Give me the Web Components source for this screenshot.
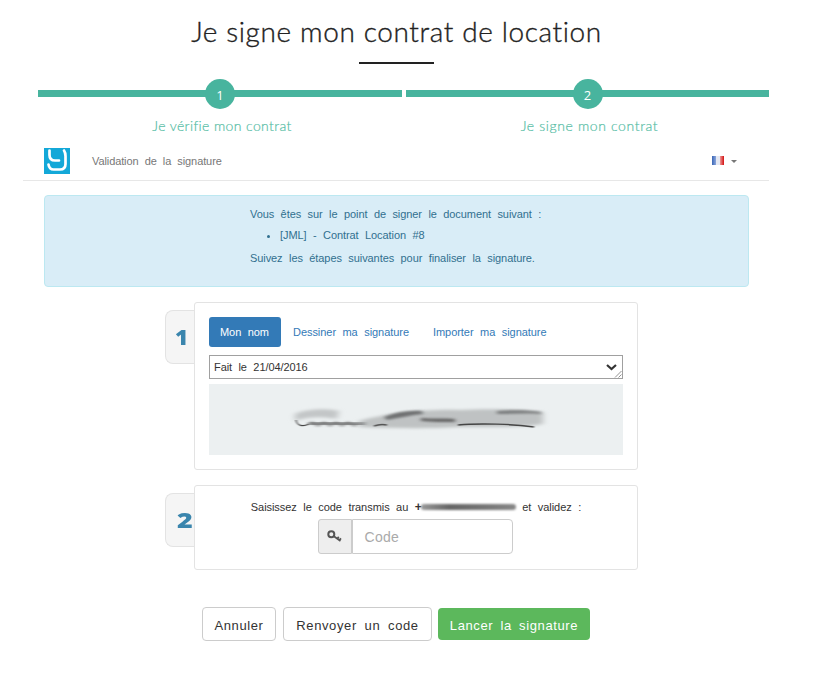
<!DOCTYPE html>
<html lang="fr">
<head>
<meta charset="utf-8">
<title>Je signe mon contrat de location</title>
<style>
  html, body { margin: 0; padding: 0; background: #fff; }
  body { font-family: "Liberation Sans", Arial, sans-serif; font-size: 11px; color: #333; }
</style>
</head>
<body>
<sign-page>
  <page-title text="Je signe mon contrat de location"></page-title>
  <step-bar>
    <step-item num="1" label="Je vérifie mon contrat" style="--label-shift: 4px"></step-item>
    <step-item num="2" label="Je signe mon contrat" style="--label-spacing: 0.62px; --label-shift: 4px"></step-item>
  </step-bar>
  <top-bar title-text="Validation de la signature"></top-bar>
  <info-alert></info-alert>
  <sign-block num="1" class="first">
    <sign-tabs></sign-tabs>
    <sign-preview></sign-preview>
  </sign-block>
  <sign-block num="2" class="second">
    <code-form></code-form>
  </sign-block>
  <action-bar></action-bar>
</sign-page>

<script>
class SignPage extends HTMLElement {
  constructor() {
    super();
    const shadow = this.attachShadow({ mode: 'open' });
    shadow.innerHTML = `
      <style>
        :host { display: block; width: 793px; height: 680px; }
      </style>
      <slot></slot>
    `;
  }
}

class PageTitle extends HTMLElement {
  constructor() {
    super();
    const shadow = this.attachShadow({ mode: 'open' });
    shadow.innerHTML = `
      <style>
        :host { display: block; padding-top: 13px; text-align: center; }
        h1 {
          margin: 0;
          font: 300 28px/36px Lato, sans-serif;
          letter-spacing: 0.62px;
          -webkit-text-stroke: 0.35px #222;
          color: #222;
        }
        .rule { width: 75px; height: 2px; margin: 13px auto 0; background: #222; }
      </style>
      <h1>${this.getAttribute('text')}</h1>
      <div class="rule"></div>
    `;
  }
}

class StepBar extends HTMLElement {
  constructor() {
    super();
    const shadow = this.attachShadow({ mode: 'open' });
    shadow.innerHTML = `
      <style>
        :host {
          display: grid;
          grid-template-columns: 364px 363px;
          column-gap: 4px;
          margin: 15px 0 0 38px;
          width: 731px;
        }
      </style>
      <slot></slot>
    `;
  }
}

class StepItem extends HTMLElement {
  constructor() {
    super();
    const shadow = this.attachShadow({ mode: 'open' });
    shadow.innerHTML = `
      <style>
        :host { display: block; text-align: center; }
        .track { display: flex; align-items: center; justify-content: center; height: 30px; position: relative; }
        .track::before {
          content: ""; position: absolute; left: 0; right: 0; top: 11px; height: 7px; background: #48b49e;
        }
        .dot {
          position: relative; width: 30px; height: 30px; border-radius: 50%;
          background: #48b49e; color: #fff;
          font: 13px/32px "Open Sans", sans-serif;
        }
        .label {
          margin-top: 7px;
          padding-left: var(--label-shift, 0);
          font: 300 14px/20px Lato, sans-serif;
          letter-spacing: var(--label-spacing, 0.38px);
          -webkit-text-stroke: 0.2px #55bda5;
          color: #55bda5;
        }
      </style>
      <div class="track"><div class="dot">${this.getAttribute('num')}</div></div>
      <div class="label">${this.getAttribute('label')}</div>
    `;
  }
}

class TopBar extends HTMLElement {
  constructor() {
    super();
    const shadow = this.attachShadow({ mode: 'open' });
    shadow.innerHTML = `
      <style>
        :host {
          display: flex; align-items: center;
          margin: 8px 0 0 23px; width: 746px; height: 37px;
          padding: 0 32px 0 21px; box-sizing: border-box;
          border-bottom: 1px solid #e7e7e7;
          color: #777; font-size: 11px;
          letter-spacing: -0.1px; word-spacing: 3.2px;
        }
        .logo { width: 26px; height: 26px; flex: none; margin-top: -3px; }
        .name { margin-left: 22px; flex: 1; margin-top: -3px; }
        .flag { width: 12px; height: 9px; display: flex; margin-top: -3px; box-sizing: border-box; }
        .flag i { flex: 1; }
        .flag i:nth-child(1) { background: linear-gradient(90deg, #3a66b5, #8ba6dc); }
        .flag i:nth-child(2) { background: #e4e8f2; }
        .flag i:nth-child(3) { background: linear-gradient(90deg, #eb9a9a, #d40f0f); }
        .caret {
          width: 0; height: 0; margin: -1px 0 0 7px;
          border-left: 3px solid transparent; border-right: 3px solid transparent; border-top: 3px solid #777;
        }
      </style>
      <svg class="logo" viewBox="0 0 26 26">
        <rect width="26" height="26" fill="#13a8d8"/>
        <path d="M5.500 2.500 V7 C5.500 11 7.500 12.500 11 12.500 H15 M20 2.500 C21 4 21.500 5 21.500 8 V16 C21.500 19.500 19.500 21.500 16 21.500 H9.500 C6.500 21.500 5 19.500 4.500 16.500" fill="none" stroke="#fff" stroke-width="2.700" stroke-linecap="round"/>
      </svg>
      <div class="name">${this.getAttribute('title-text')}</div>
      <div class="flag"><i></i><i></i><i></i></div>
      <div class="caret"></div>
    `;
  }
}

class InfoAlert extends HTMLElement {
  constructor() {
    super();
    const shadow = this.attachShadow({ mode: 'open' });
    shadow.innerHTML = `
      <style>
        :host {
          display: block; box-sizing: border-box;
          margin: 14px 0 0 44px; width: 705px; height: 92px; padding-top: 10px;
          background: #d9edf7; border: 1px solid #bce8f1; border-radius: 4px;
          color: #31708f; font-size: 11px; line-height: 16px;
          letter-spacing: -0.08px; word-spacing: 3.5px;
        }
        .inner { width: 292px; margin-left: 205px; }
        p { margin: 0; white-space: nowrap; }
        ul { margin: 5px 0 7px; padding-left: 30px; }
      </style>
      <div class="inner">
        <p>Vous êtes sur le point de signer le document suivant :</p>
        <ul><li>[JML] - Contrat Location #8</li></ul>
        <p>Suivez les étapes suivantes pour finaliser la signature.</p>
      </div>
    `;
  }
}

class SignBlock extends HTMLElement {
  constructor() {
    super();
    const shadow = this.attachShadow({ mode: 'open' });
    shadow.innerHTML = `
      <style>
        :host { display: flex; margin-left: 165px; width: 473px; align-items: flex-start; }
        :host(.first) { margin-top: 15px; }
        :host(.second) { margin-top: 15px; }
        .badge {
          flex: none; box-sizing: border-box; width: 30px; height: 54px; margin-top: 8px;
          background: #f5f5f5; border: 1px solid #e3e3e3; border-right: 0;
          border-radius: 8px 0 0 8px;
          font: 800 21px/52px "Open Sans", sans-serif; color: #3a85ad;
          padding-left: 11px;
        }
        :host([num="1"]) .badge { padding-left: 9px; }
        .badge span { display: inline-block; transform: scaleX(1.280); transform-origin: left; }
        :host([num="1"]) .badge span { transform: scaleX(1.080); }
        .panel {
          position: relative; flex: 1; margin-left: -1px; box-sizing: border-box;
          background: #fff; border: 1px solid #e3e3e3; border-radius: 3px;
        }
      </style>
      <div class="badge"><span>${this.getAttribute('num')}</span></div>
      <div class="panel"><slot></slot></div>
    `;
  }
}

class SignTabs extends HTMLElement {
  constructor() {
    super();
    const shadow = this.attachShadow({ mode: 'open' });
    shadow.innerHTML = `
      <style>
        :host {
          display: block; padding: 14px 14px 0;
          font-size: 11px; letter-spacing: -0.05px; word-spacing: 3.5px;
        }
        .tabs { display: flex; height: 30px; align-items: center; color: #337ab7; }
        .tab { padding: 0 12px; line-height: 30px; }
        .active { background: #337ab7; color: #fff; border-radius: 3px; width: 72px; box-sizing: border-box; padding: 0 1px 0 0; text-align: center; }
        .field { position: relative; margin-top: 8px; height: 24px; }
        select {
          display: block; box-sizing: border-box; appearance: none;
          width: 414px; height: 24px; padding: 0 0 0 4px;
          border: 1px solid #a0a0a0; border-radius: 0; background: #fff;
          font: 11px "Liberation Sans", Arial, sans-serif; color: #333;
          letter-spacing: -0.08px; word-spacing: 3.5px;
        }
        .marks { position: absolute; right: 0; top: 0; pointer-events: none; }
      </style>
      <div class="tabs">
        <div class="tab active">Mon nom</div>
        <div class="tab">Dessiner ma signature</div>
        <div class="tab">Importer ma signature</div>
      </div>
      <div class="field">
        <select><option>Fait le 21/04/2016</option></select>
        <svg class="marks" width="24" height="24" viewBox="0 0 24 24">
          <path d="M8 10 L12.500 14 L17 10" fill="none" stroke="#333" stroke-width="2.200"/>
          <path d="M16 22.500 L22.500 16 M19.500 22.500 L22.500 19.500" fill="none" stroke="#777" stroke-width="0.800"/>
        </svg>
      </div>
    `;
  }
}

class SignPreview extends HTMLElement {
  constructor() {
    super();
    const shadow = this.attachShadow({ mode: 'open' });
    shadow.innerHTML = `
      <style>
        :host {
          display: block; width: 414px; height: 71px; margin: 5px 14px 14px;
          background: #ecf0f1; overflow: hidden;
        }
        svg { display: block; }
      </style>
      <svg width="414" height="71" viewBox="0 0 414 71">
        <defs>
          <filter id="soft" x="-20%" y="-150%" width="140%" height="400%"><feGaussianBlur stdDeviation="3 1.600"/></filter>
          <filter id="mid" x="-20%" y="-150%" width="140%" height="400%"><feGaussianBlur stdDeviation="2 0.900"/></filter>
          <filter id="thin" x="-10%" y="-150%" width="120%" height="400%"><feGaussianBlur stdDeviation="0.900 0.500"/></filter>
        </defs>
        <path d="M86 30 C96 25 118 24 130 27 L128 35 C112 32 96 33 86 37 Z" fill="#c3c6c7" filter="url(#soft)"/>
        <path d="M150 37 C175 30 215 25 250 26 C285 24 315 26 334 28 L334 40 C310 44 280 43 250 43 C215 45 185 44 150 43 Z" fill="#bfc2c3" filter="url(#soft)"/>
        <path d="M175 33 C187 28 200 26 213 27 L214 30 C202 31 190 34 178 36 Z" fill="#6f7172" filter="url(#mid)"/>
        <path d="M212 34 C222 35 236 34 246 35 L246 38 C235 38 222 38 212 37 Z" fill="#666" filter="url(#mid)"/>
        <path d="M288 27 C302 26 320 26 332 28 L332 30 C318 29 302 30 288 30 Z" fill="#7c7e7f" filter="url(#mid)"/>
        <path d="M249 41 C270 39 305 40 325 43" fill="none" stroke="#444" stroke-width="1.500" filter="url(#thin)"/>
        <path d="M165 42 C170 40 174 40 178 41" fill="none" stroke="#555" stroke-width="1.500" filter="url(#thin)"/>
        <path d="M100 40 C118 39 138 40 156 40" fill="none" stroke="#8f9192" stroke-width="4.500" filter="url(#mid)"/>
        <path d="M87 36 C88 42 94 43 100 40" fill="none" stroke="#444" stroke-width="1.200" filter="url(#thin)"/>
        <path d="M100 40 q3 -3 6 0 t6 0 t6 0 t6 0 t6 0 t6 0 t6 0 t6 0" fill="none" stroke="#666" stroke-width="1.500" filter="url(#mid)"/>
      </svg>
    `;
  }
}

class CodeForm extends HTMLElement {
  constructor() {
    super();
    const shadow = this.attachShadow({ mode: 'open' });
    shadow.innerHTML = `
      <style>
        :host {
          display: block; height: 83px; padding-top: 14px; box-sizing: border-box; text-align: center;
          font-size: 11px; line-height: 14px; color: #333;
          letter-spacing: -0.05px; word-spacing: 3.5px;
        }
        .plus { font-weight: 700; font-size: 12px; }
        .mask {
          display: inline-block; width: 95px; height: 6px; vertical-align: 1px; margin-left: -1px;
          background: linear-gradient(90deg, #999, #666 30%, #777 70%, #888);
          filter: blur(1.200px); border-radius: 3px;
        }
        .group { display: flex; justify-content: center; margin-top: 5px; height: 35px; padding-right: 2px; }
        .addon {
          box-sizing: border-box; width: 34px; display: flex; align-items: center; justify-content: center;
          background: #eee; border: 1px solid #ccc; border-radius: 3px 0 0 3px;
        }
        .input {
          box-sizing: border-box; width: 161px; text-align: left; padding-left: 12px;
          border: 1px solid #ccc; border-radius: 0 4px 4px 0;
          font-size: 14px; line-height: 35px; color: #aaa; letter-spacing: 0.3px;
        }
      </style>
      <div>Saisissez le code transmis au <span class="plus">+</span><span class="mask"></span> et validez :</div>
      <div class="group">
        <div class="addon">
          <svg width="15" height="13" viewBox="0 0 15 13">
            <circle cx="4.300" cy="4.300" r="3" fill="none" stroke="#555" stroke-width="2"/>
            <path d="M6.500 6 L13.500 11 M10 8.800 L11.800 6.800 M12.300 10.200 L14 8.400" fill="none" stroke="#555" stroke-width="1.800"/>
          </svg>
        </div>
        <div class="input">Code</div>
      </div>
    `;
  }
}

class ActionBar extends HTMLElement {
  constructor() {
    super();
    const shadow = this.attachShadow({ mode: 'open' });
    shadow.innerHTML = `
      <style>
        :host {
          display: flex; align-items: center; margin: 37px 0 0 202px; width: 388px; height: 34px;
          font-size: 13px; letter-spacing: 0.62px; word-spacing: 3.5px;
        }
        .btn {
          box-sizing: border-box; height: 34px; line-height: 35px; text-align: center;
          border: 1px solid #ccc; border-radius: 4px; background: #fff; color: #333;
        }
        .a { width: 74px; }
        .b { width: 149px; margin-left: 7px; }
        .c { width: 152px; margin-left: 6px; height: 32px; line-height: 35px; border: 0; background: #5cb85c; color: #fff; word-spacing: 3px; }
      </style>
      <div class="btn a">Annuler</div>
      <div class="btn b">Renvoyer un code</div>
      <div class="btn c">Lancer la signature</div>
    `;
  }
}

customElements.define('sign-page', SignPage);
customElements.define('page-title', PageTitle);
customElements.define('step-bar', StepBar);
customElements.define('step-item', StepItem);
customElements.define('top-bar', TopBar);
customElements.define('info-alert', InfoAlert);
customElements.define('sign-block', SignBlock);
customElements.define('sign-tabs', SignTabs);
customElements.define('sign-preview', SignPreview);
customElements.define('code-form', CodeForm);
customElements.define('action-bar', ActionBar);
</script>
</body>
</html>
